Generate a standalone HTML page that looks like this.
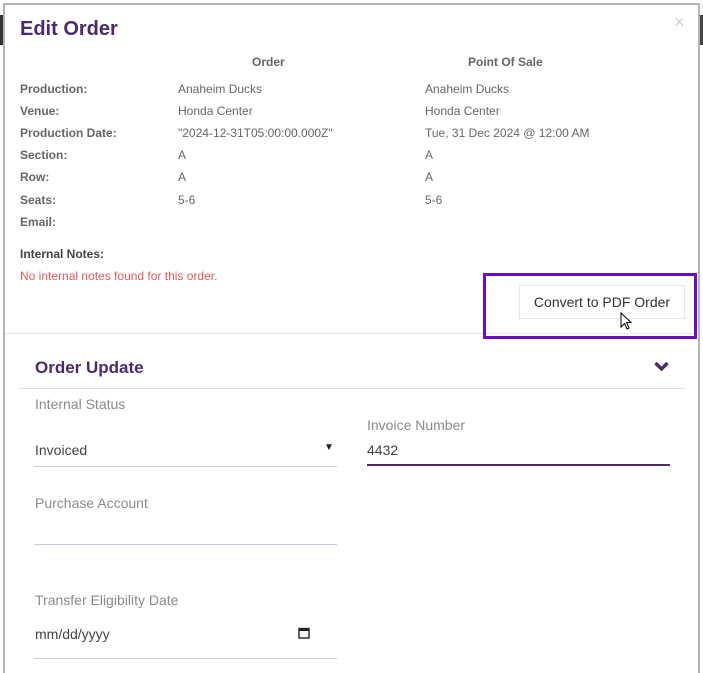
<!DOCTYPE html>
<html><head><style>
*{margin:0;padding:0;box-sizing:border-box}
body{width:703px;height:663px;overflow:hidden;background:#fff;font-family:"Liberation Sans",sans-serif;position:relative}
.modal{position:absolute;left:3px;top:3px;width:697px;height:670px;border:2px solid #b5b5b5;border-bottom:none;background:#fff}
.a{position:absolute;white-space:nowrap}
.lbl{font-size:12px;font-weight:bold;color:#666}
.val{font-size:12px;color:#666}
.h{font-size:12px;font-weight:bold;color:#666}
.fl{font-size:14px;color:#8a8a8a}
.fv{font-size:14px;color:#444}
.ln{position:absolute;height:1px;background:#c8cdd9}
</style></head><body>
<div style="position:absolute;left:0;top:15px;width:3px;height:30px;background:#333"></div>
<div style="position:absolute;left:700px;top:15px;width:3px;height:30px;background:#444"></div>
<div class="modal"></div>
<div class="a" style="left:20px;top:18px;font-size:20px;font-weight:bold;color:#4a2a6b">Edit Order</div>
<div class="a" style="left:674px;top:12px;font-size:18px;color:#d0d0d0">×</div>
<div class="a h" style="left:252px;top:55px">Order</div>
<div class="a h" style="left:468px;top:55px">Point Of Sale</div>

<div class="a lbl" style="left:20px;top:82px">Production:</div>
<div class="a lbl" style="left:20px;top:104px">Venue:</div>
<div class="a lbl" style="left:20px;top:126px">Production Date:</div>
<div class="a lbl" style="left:20px;top:148px">Section:</div>
<div class="a lbl" style="left:20px;top:170px">Row:</div>
<div class="a lbl" style="left:20px;top:193px">Seats:</div>
<div class="a lbl" style="left:20px;top:215px">Email:</div>

<div class="a val" style="left:178px;top:82px">Anaheim Ducks</div>
<div class="a val" style="left:178px;top:104px">Honda Center</div>
<div class="a val" style="left:178px;top:126px">"2024-12-31T05:00:00.000Z"</div>
<div class="a val" style="left:178px;top:148px">A</div>
<div class="a val" style="left:178px;top:170px">A</div>
<div class="a val" style="left:178px;top:193px">5-6</div>

<div class="a val" style="left:425px;top:82px">Anaheim Ducks</div>
<div class="a val" style="left:425px;top:104px">Honda Center</div>
<div class="a val" style="left:425px;top:126px">Tue, 31 Dec 2024 @ 12:00 AM</div>
<div class="a val" style="left:425px;top:148px">A</div>
<div class="a val" style="left:425px;top:170px">A</div>
<div class="a val" style="left:425px;top:193px">5-6</div>

<div class="a lbl" style="left:20px;top:247px;color:#444">Internal Notes:</div>
<div class="a val" style="left:20px;top:269px;color:#e05a5a">No internal notes found for this order.</div>

<div style="position:absolute;left:5px;top:333px;width:694px;height:1px;background:#e5e5e5"></div>
<div style="position:absolute;left:483px;top:273px;width:214px;height:66px;border:3px solid #6a0cc6"></div>
<div style="position:absolute;left:519px;top:285px;width:166px;height:34px;border:1px solid #e6e6e6;background:#fff;font-size:14px;color:#333;text-align:center;line-height:32px">Convert to PDF Order</div>
<svg style="position:absolute;left:620px;top:312px" width="14" height="20" viewBox="0 0 14 20"><path d="M1 1 L1 15 L4.5 11.5 L7 17 L9 16 L6.5 10.5 L11 10.5 Z" fill="#fff" stroke="#000" stroke-width="1"/></svg>

<div class="a" style="left:35px;top:358px;font-size:17px;font-weight:bold;color:#4a2a6b">Order Update</div>
<svg style="position:absolute;left:654px;top:361px" width="15" height="11" viewBox="0 0 15 11"><path d="M1.5 2 L7.5 8 L13.5 2" fill="none" stroke="#4a2a6b" stroke-width="3.4"/></svg>
<div style="position:absolute;left:19px;top:388px;width:666px;height:1px;background:#ddd"></div>

<div class="a fl" style="left:35px;top:396px">Internal Status</div>
<div class="a fv" style="left:35px;top:442px">Invoiced</div>
<div class="a" style="left:324px;top:442px;font-size:10px;color:#222">▼</div>
<div class="ln" style="left:34px;top:466px;width:303px"></div>

<div class="a fl" style="left:367px;top:417px">Invoice Number</div>
<div class="a fv" style="left:367px;top:442px">4432</div>
<div style="position:absolute;left:367px;top:464px;width:303px;height:2px;background:#4a2a6b"></div>

<div class="a fl" style="left:35px;top:495px">Purchase Account</div>
<div class="ln" style="left:34px;top:544px;width:303px"></div>

<div class="a fl" style="left:35px;top:592px">Transfer Eligibility Date</div>
<div class="a fv" style="left:35px;top:626px">mm/dd/yyyy</div>
<svg style="position:absolute;left:298px;top:627px" width="12" height="12" viewBox="0 0 12 12"><rect x="1" y="1.5" width="10" height="9.5" fill="none" stroke="#222" stroke-width="1.4"/><rect x="1" y="1.5" width="10" height="2.5" fill="#222"/></svg>
<div class="ln" style="left:34px;top:658px;width:303px"></div>
</body></html>
